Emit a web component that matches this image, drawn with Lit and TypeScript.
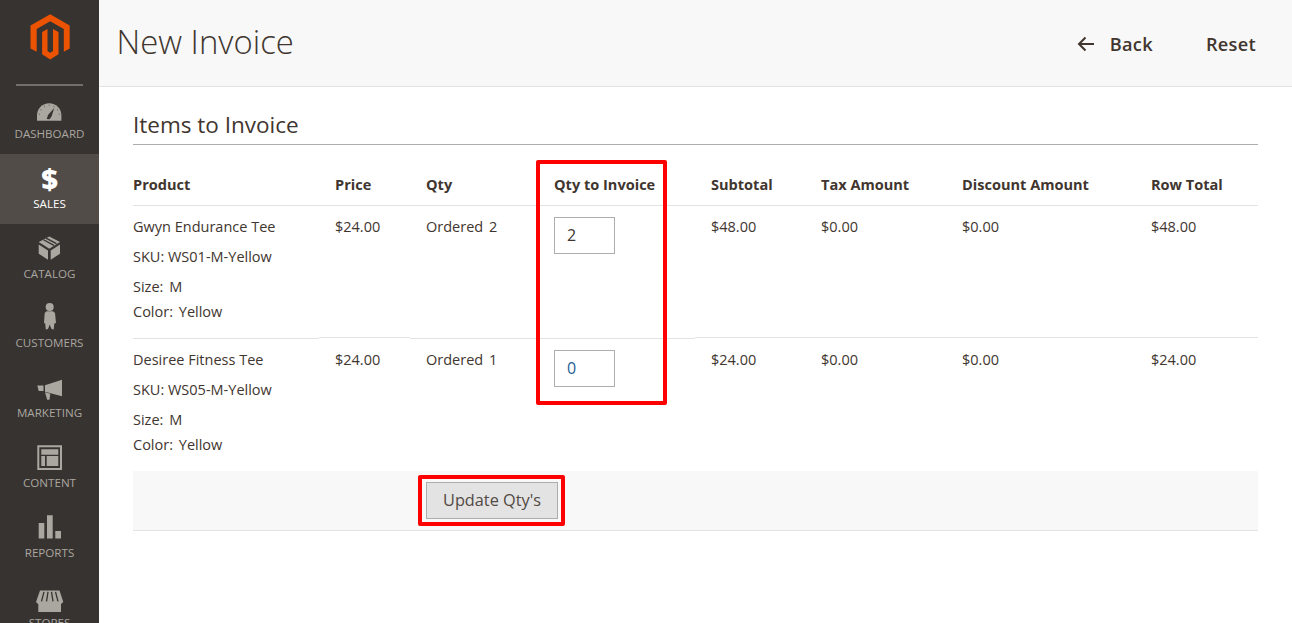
import { LitElement, html, css, svg } from "lit";
import { customElement } from "lit/decorators.js";

/* Every nav icon is drawn in page pixels; the viewBox selects its item's slot. */
const C = "#aaa6a0";
const D = "#373330";
const ICONS: Record<string, unknown> = {
  dashboard: svg`<path fill="${C}" d="M37 120.700V115.300C37 108.500 42.500 103.200 49.200 103.200S61.400 108.500 61.400 115.300V120.700Z"/><path fill="${D}" d="M46.700 119 48 115 54.300 108 51.500 116.500 49.500 119.300Z"/><g fill="#77736e"><rect x="48.700" y="104.500" width="1" height="1.500"/><rect x="44" y="105.700" width="1" height="1.500"/><rect x="53.500" y="105.700" width="1" height="1.500"/><rect x="40.500" y="109" width="1" height="1.500"/><rect x="57" y="109" width="1" height="1.500"/><rect x="38.800" y="113.500" width="1" height="1.500"/><rect x="58.800" y="113.500" width="1" height="1.500"/></g>`,
  catalog: svg`<path fill="${C}" d="M49.300 236 60 241.600 49.300 248.300 38.700 241.600Z"/><path fill="none" stroke="${D}" stroke-width="1.300" d="M43.500 239.300 54 245M46 237.800 56.500 243.300"/><path fill="${C}" d="M38.700 244 48 250V259.300L38.700 253.300ZM60 244 50.700 250V259.300L60 253.300Z"/>`,
  customers: svg`<circle cx="49.700" cy="307.300" r="4" fill="${C}"/><path fill="${C}" d="M46.500 311.700H53L55 313.500 56 323.500 54.300 324 53.700 330 51.500 329.500 49.700 325 48 329.500 45.800 330 45.200 324 44 323.500 44.700 313.500Z"/>`,
  marketing: svg`<path fill="${C}" d="M62 380V396.500L45 392V385.500ZM37.300 385.700H43.500V391.300H38.700ZM45 392.500 50.300 394 49.500 400H47.200Z"/>`,
  content: svg`<path fill-rule="evenodd" fill="${C}" d="M37.300 445.300H62V470H37.300ZM39.300 447.300V468H60V447.300Z"/><path fill="${C}" d="M41.300 449.300H58.300V454.700H41.300ZM41.300 456H45V466H41.300ZM46.700 456H58.300V466H46.700Z"/>`,
  reports: svg`<path fill="${C}" d="M38.700 522.700H44.300V538.300H38.700ZM47 515H52.700V538.300H47ZM55.300 530.700H61V538.300H55.300Z"/>`,
  stores: svg`<path fill="${C}" d="M38.300 602.500H61V611.700H38.300ZM40 590H59.500L63.300 601.500 61 603.500 58 602.500 55 603.500 52 602.500 49.500 603.500 46.500 602.500 43.500 603.500 40.500 602.500 38 603.500 36 601.500Z"/><path stroke="${D}" stroke-width="1.300" fill="none" d="M44 591.500 41.500 601M48 591.500 46.500 601M51.500 591.500 53 601M55.500 591.500 58 601"/>`,
};

const NAV = [
  { k: "dashboard", l: "DASHBOARD", top: 84 },
  { k: "sales", l: "SALES", top: 153.8 },
  { k: "catalog", l: "CATALOG", top: 223.6 },
  { k: "customers", l: "CUSTOMERS", top: 293.4 },
  { k: "marketing", l: "MARKETING", top: 363.2 },
  { k: "content", l: "CONTENT", top: 433 },
  { k: "reports", l: "REPORTS", top: 502.8 },
  { k: "stores", l: "STORES", top: 572.6 },
];

const ROWS = [
  { name: "Gwyn Endurance Tee", sku: "WS01-M-Yellow", ord: "2", qty: "2", total: "$48.00" },
  { name: "Desiree Fitness Tee", sku: "WS05-M-Yellow", ord: "1", qty: "0", total: "$24.00" },
];

@customElement("app-root")
export class AppRoot extends LitElement {
  static styles = css`
    :host {
      display: flex;
      width: 1292px;
      height: 623px;
      overflow: hidden;
      font-family: "Open Sans", sans-serif;
      color: #41362f;
      font-size: 14.5px;
      background: #fff;
    }
    .side {
      width: 99px;
      flex: none;
      background: #373330;
      overflow: hidden;
    }
    .logo {
      height: 84px;
      display: flex;
      justify-content: center;
      padding-top: 13px;
      box-sizing: border-box;
      position: relative;
    }
    .rule {
      position: absolute;
      left: 16px;
      width: 67px;
      top: 84px;
      height: 2px;
      background: #736e69;
    }
    .item {
      height: 69.8px;
      display: flex;
      flex-direction: column;
      align-items: center;
      box-sizing: border-box;
      color: #aaa6a0;
      font-size: 11.6px;
      line-height: 14px;
    }
    .item.active {
      background: #514c48;
      color: #fff;
    }
    .icbox {
      height: 42px;
      width: 99px;
      flex: none;
      display: flex;
      justify-content: center;
    }
    .icbox svg {
      display: block;
    }
    .lab {
      margin-top: 1px;
    }
    .dollar {
      font-size: 29px;
      font-weight: 800;
      line-height: 36px;
      padding-top: 7px;
      color: #fff;
    }
    .main {
      flex: 1;
      min-width: 0;
    }
    .head {
      height: 87px;
      box-sizing: border-box;
      background: #f8f8f8;
      border-bottom: 1px solid #e3e3e3;
      display: flex;
      align-items: center;
      padding: 0 36px 0 18px;
    }
    h1 {
      margin: 0 0 2px -0.5px;
      flex: 1;
      font-size: 32.9px;
      font-weight: 300;
      line-height: 44px;
      color: #41362f;
    }
    .back {
      display: flex;
      align-items: center;
      font-size: 18.2px;
      font-weight: 600;
      color: #41362f;
      letter-spacing: 0.3px;
      padding-top: 2px;
    }
    .back svg {
      margin-right: 15px;
    }
    .reset {
      margin-left: 53px;
      font-size: 18.2px;
      font-weight: 600;
      letter-spacing: 0.3px;
      padding-top: 2px;
    }
    .body {
      padding: 22px 34px 0 34px;
      position: relative;
    }
    h2 {
      margin: 0;
      font-size: 22.5px;
      font-weight: 400;
      line-height: 31px;
      padding-bottom: 4px;
      border-bottom: 1px solid #adadad;
      color: #41362f;
    }
    table {
      border-collapse: separate;
      border-spacing: 0;
      table-layout: fixed;
      width: 1125px;
    }
    th {
      text-align: left;
      font-weight: 700;
      padding: 17px 0 0 16px;
      height: 61px;
      vertical-align: middle;
      box-sizing: border-box;
      border-bottom: 1px solid #e3e3e3;
      white-space: nowrap;
      font-size: 14.55px;
    }
    td {
      padding: 12px 0 0 16px;
      vertical-align: top;
      height: 133px;
      box-sizing: border-box;
      line-height: 19px;
      border-bottom: 1px solid #e3e3e3;
    }
    th:first-child,
    td:first-child {
      padding-left: 0;
    }
    tr:first-child td {
      padding-top: 11px;
      height: 132px;
    }
    tr:first-child td.low {
      border-bottom-color: transparent;
      box-shadow: 0 1px 0 #e3e3e3;
    }
    tr:last-child td {
      border-bottom: 0;
    }
    .meta {
      margin-top: 11px;
    }
    .meta2 {
      margin-top: 11px;
    }
    .meta3 {
      margin-top: 6px;
    }
    .val {
      margin-left: 5.8px;
    }
    .qty {
      display: block;
      width: 61px;
      height: 37px;
      box-sizing: border-box;
      border: 1px solid #adadad;
      padding: 0 0 0 12px;
      line-height: 35px;
      font-size: 16px;
    }
    .blue {
      color: #1c5f94;
    }
    .act {
      height: 60px;
      box-sizing: border-box;
      background: #f8f8f8;
      border-bottom: 1px solid #e3e3e3;
      padding: 11px 0 0 293px;
    }
    button {
      display: block;
      width: 132px;
      height: 37px;
      box-sizing: border-box;
      padding: 0 0 2px;
      background: #e3e3e3;
      border: 1px solid #adadad;
      color: #514943;
      font-family: "Open Sans", sans-serif;
      font-size: 16.3px;
      font-weight: 500;
    }
    .mark {
      position: absolute;
      border: 4px solid #f00;
      border-radius: 2px;
      box-sizing: border-box;
      pointer-events: none;
    }
    .m1 {
      left: 437px;
      top: 73px;
      width: 131px;
      height: 245px;
    }
    .m2 {
      left: 319px;
      top: 388px;
      width: 147px;
      height: 51px;
    }
  `;

  render() {
    return html`
      <nav class="side">
        <div class="logo">
          <svg width="46" height="48" viewBox="26.500 13 46 48">
            <path fill="#eb5202" d="M49.700 14.300 69.200 25.600V48.400L63.300 51.800V29L49.700 21.200 36.200 29V51.800L30 48.400V25.600Z M41.600 32.100 47 29V51.100L49.700 52.800 52.500 51.100V29L58 32.100V54.200L49.700 59.400 41.600 54.200Z"/>
          </svg>
          <div class="rule"></div>
        </div>
        ${NAV.map(
          (n) => html`
            <div class="item ${n.k === "sales" ? "active" : ""}">
              <div class="icbox">
                ${n.k === "sales"
                  ? html`<span class="dollar">$</span>`
                  : html`<svg width="99" height="42" viewBox="0 ${n.top} 99 42">${ICONS[n.k]}</svg>`}
              </div>
              <div class="lab">${n.l}</div>
            </div>
          `
        )}
      </nav>
      <div class="main">
        <header class="head">
          <h1>New Invoice</h1>
          <div class="back">
            <svg width="18" height="16" viewBox="0 0 18 16">
              <path fill="none" stroke="#41362f" stroke-width="2" d="M17 8H2.500M8.500 1.500 2 8l6.500 6.500"/>
            </svg>
            Back
          </div>
          <div class="reset">Reset</div>
        </header>
        <section class="body">
          <h2>Items to Invoice</h2>
          <table>
            <colgroup>
              <col style="width:186px" />
              <col style="width:91px" />
              <col style="width:128px" />
              <col style="width:157px" />
              <col style="width:110px" />
              <col style="width:141px" />
              <col style="width:189px" />
              <col style="width:123px" />
            </colgroup>
            <thead>
              <tr>
                <th>Product</th>
                <th>Price</th>
                <th>Qty</th>
                <th>Qty to Invoice</th>
                <th>Subtotal</th>
                <th>Tax Amount</th>
                <th>Discount Amount</th>
                <th>Row Total</th>
              </tr>
            </thead>
            <tbody>
              ${ROWS.map(
                (r, i) => html`
                  <tr>
                    <td class="low">
                      <div>${r.name}</div>
                      <div class="meta">SKU: ${r.sku}</div>
                      <div class="meta2">Size:<span class="val">M</span></div>
                      <div class="meta3">Color:<span class="val">Yellow</span></div>
                    </td>
                    <td>$24.00</td>
                    <td class="low">Ordered<span class="val">${r.ord}</span></td>
                    <td class="low"><div class="qty ${i === 1 ? "blue" : ""}">${r.qty}</div></td>
                    <td>${r.total}</td>
                    <td>$0.00</td>
                    <td>$0.00</td>
                    <td>${r.total}</td>
                  </tr>
                `
              )}
            </tbody>
          </table>
          <div class="act"><button>Update Qty's</button></div>
          <div class="mark m1"></div>
          <div class="mark m2"></div>
        </section>
      </div>
    `;
  }
}
